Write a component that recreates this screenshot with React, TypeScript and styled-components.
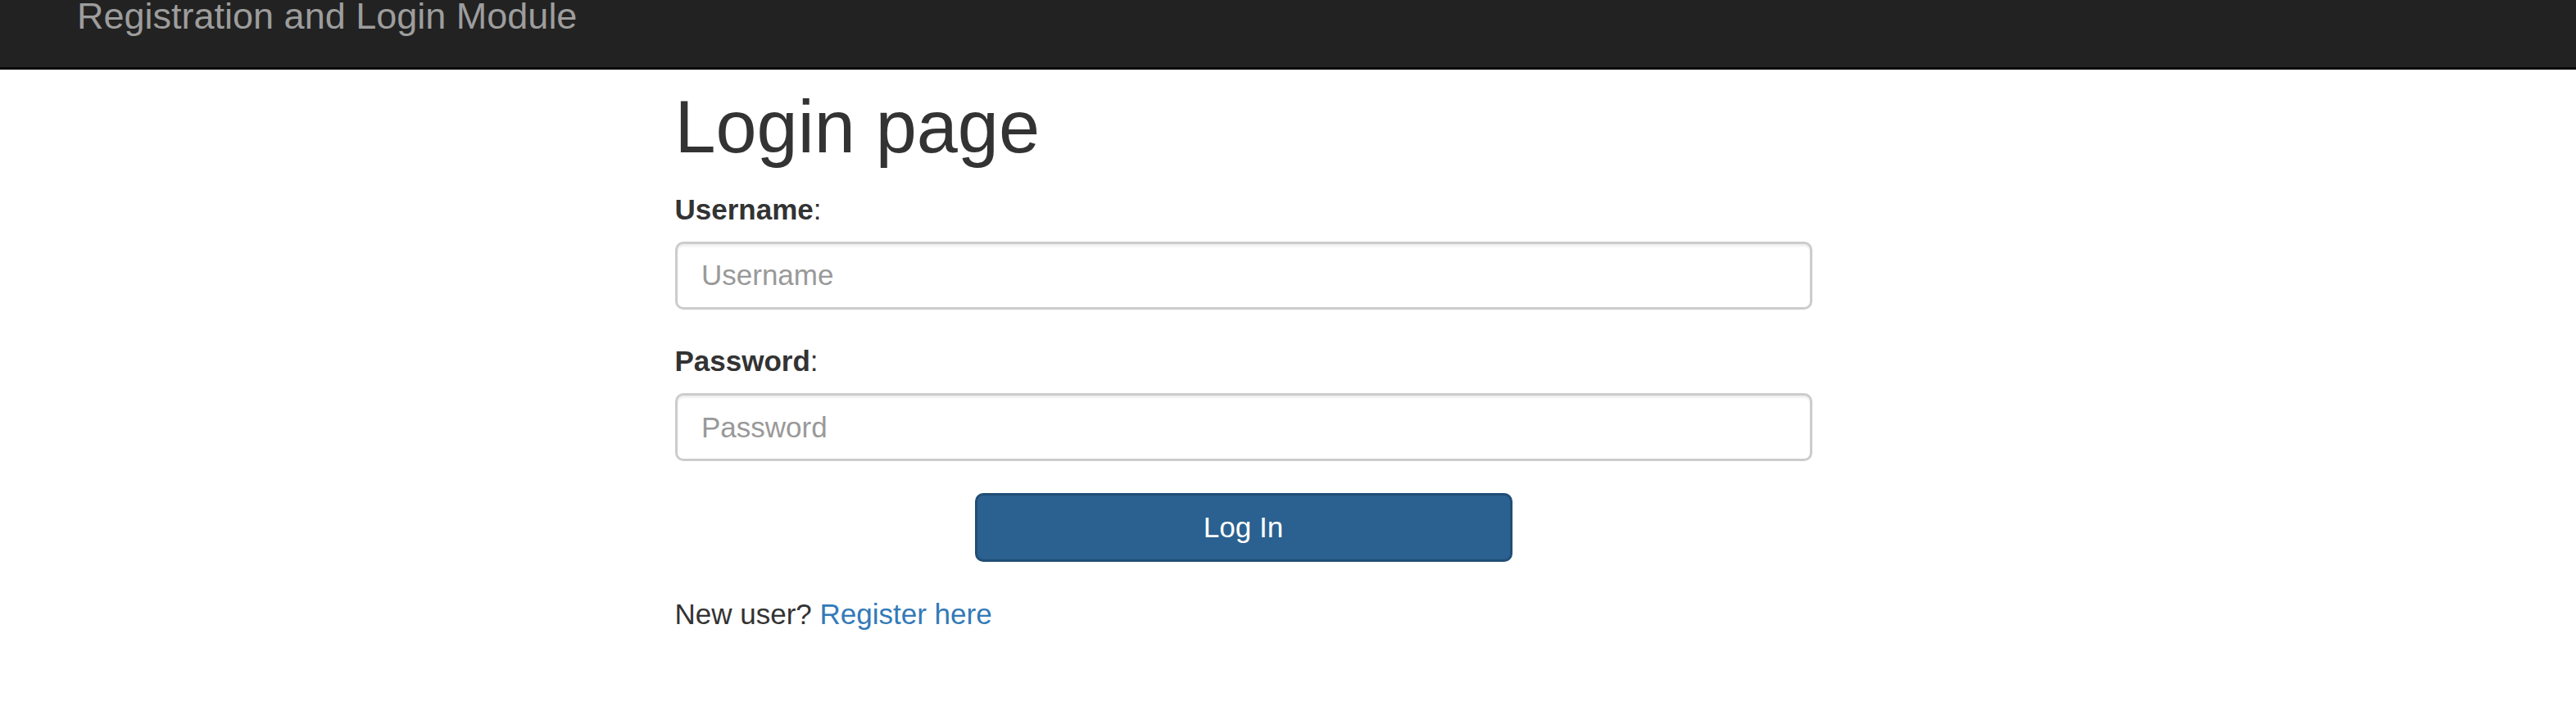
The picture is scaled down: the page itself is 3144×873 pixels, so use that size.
import React from "react";
import styled, { createGlobalStyle } from "styled-components";

const GlobalStyle = createGlobalStyle`
  html, body {
    margin: 0;
    padding: 0;
    background: #ffffff;
  }
  body {
    font-family: "Liberation Sans", Arial, Helvetica, sans-serif;
    color: #333333;
  }
  * { box-sizing: border-box; }
`;

const Navbar = styled.header`
  height: 85px;
  background: #222222;
  border-bottom: 3px solid #080808;
  display: flex;
  align-items: flex-start;
  padding-left: 94px;
`;

const Brand = styled.a`
  font-size: 45px;
  line-height: 40px;
  color: #9d9d9d;
  text-decoration: none;
  white-space: nowrap;
`;

const Page = styled.main`
  width: 3035px;
`;

const Column = styled.div`
  width: 1388px;
  margin: 0 auto;
  padding-top: 21px;
`;

const Title = styled.h1`
  margin: 0 0 25.5px 0;
  font-size: 90px;
  line-height: 99px;
  font-weight: 400;
  color: #333333;
`;

const Form = styled.form`
  display: flex;
  flex-direction: column;
`;

const FieldGroup = styled.div`
  display: flex;
  flex-direction: column;
  margin-bottom: 38.5px;
`;

const Label = styled.label`
  font-size: 35px;
  line-height: 50px;
  color: #333333;
  margin-bottom: 14px;
`;

const Strong = styled.b`
  font-weight: 700;
`;

const Input = styled.input`
  height: 83px;
  width: 100%;
  border: 3px solid #cccccc;
  border-radius: 10px;
  padding: 0 29.5px;
  font-family: "Liberation Sans", Arial, Helvetica, sans-serif;
  font-size: 35px;
  color: #555555;
  background: #ffffff;
  box-shadow: inset 0 2.5px 2.5px rgba(0, 0, 0, 0.075);
  outline: none;
  &::placeholder {
    color: #999999;
  }
`;

const SubmitButton = styled.button`
  display: block;
  width: 656px;
  height: 84px;
  margin: 0 auto;
  background: #2a6190;
  border: 3px solid #214e75;
  border-radius: 10px;
  color: #ffffff;
  font-family: "Liberation Sans", Arial, Helvetica, sans-serif;
  font-size: 35px;
  line-height: 50px;
  cursor: pointer;
`;

const Footer = styled.p`
  margin: 39px 0 0 0;
  font-size: 35px;
  line-height: 50px;
  color: #333333;
`;

const Link = styled.a`
  color: #337ab7;
  text-decoration: none;
`;

export default function App() {
  return (
    <>
      <GlobalStyle />
      <Navbar>
        <Brand href="#">Registration and Login Module</Brand>
      </Navbar>
      <Page>
        <Column>
          <Title>Login page</Title>
          <Form onSubmit={(e) => e.preventDefault()}>
            <FieldGroup>
              <Label htmlFor="username">
                <Strong>Username</Strong>:
              </Label>
              <Input id="username" type="text" placeholder="Username" />
            </FieldGroup>
            <FieldGroup>
              <Label htmlFor="password">
                <Strong>Password</Strong>:
              </Label>
              <Input id="password" type="password" placeholder="Password" />
            </FieldGroup>
            <SubmitButton type="submit">Log In</SubmitButton>
          </Form>
          <Footer>
            New user? <Link href="#">Register here</Link>
          </Footer>
        </Column>
      </Page>
    </>
  );
}
